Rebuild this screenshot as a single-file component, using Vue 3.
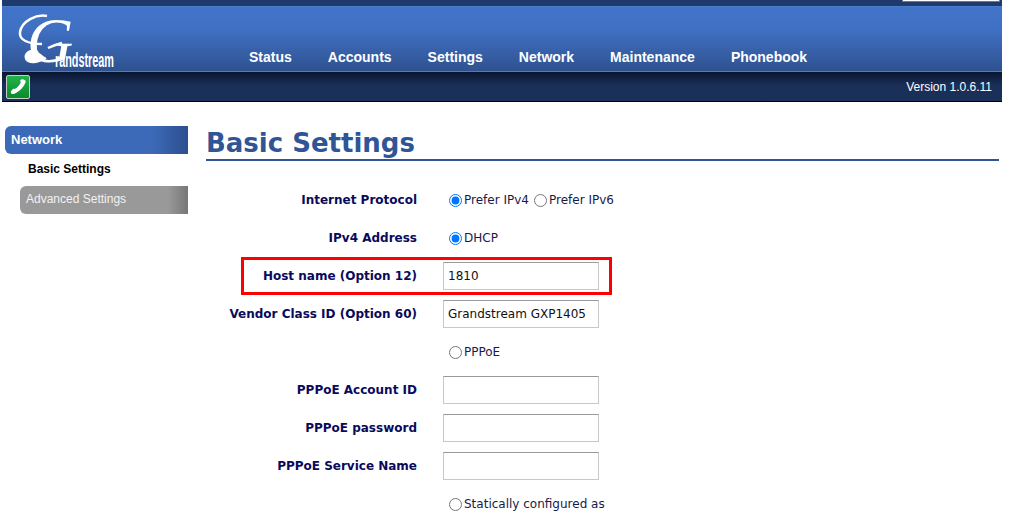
<script setup>
const menu = ['Status', 'Accounts', 'Settings', 'Network', 'Maintenance', 'Phonebook']
</script>

<template>
  <div class="page">
    <header class="header">
      <div class="top-strip">
        <div class="login-box"></div>
      </div>
      <div class="nav-bar">
        <svg class="logo" width="104" height="62" viewBox="0 0 104 62">
          <text x="15" y="54" class="logo-g" font-size="64">G</text>
          <path d="M35 8C24 6 10 13 8 24C7 32 16 36 30 36" class="swash" />
          <path d="M26 44C18 40 12 46 14 51C17 56 26 55 34 50" class="swash-thick" />
          <path d="M36 40C42 37 46 36 50 35" class="swash" />
          <text x="43" y="59" class="logo-text" textLength="59" lengthAdjust="spacingAndGlyphs">randstream</text>
        </svg>
        <nav class="menu">
          <a v-for="item in menu" :key="item" class="menu-item">{{ item }}</a>
        </nav>
      </div>
      <div class="status-bar">
        <div class="phone-icon">
          <svg width="20" height="20" viewBox="0 0 20 20">
            <path d="M15.5 2.5c-1-.6-2.2-.3-3 .6-.5.6-.2 1.500.3 2.100-.9 2.600-3.200 5.300-6 6.900-.7-.4-1.500-.4-2 .1-1 .9-2.200 2.200-2 3.500.2 1.100 2.100 1.800 3.600 1.100 5.300-2.400 9.900-7.300 11.300-12.100.3-1-.8-1.600-2.200-2.200z" fill="#fff" />
          </svg>
        </div>
        <span class="version">Version 1.0.6.11</span>
      </div>
    </header>

    <div class="content">
      <aside class="sidebar">
        <div class="side-title">Network</div>
        <div class="side-active">Basic Settings</div>
        <div class="side-link">Advanced Settings</div>
      </aside>

      <main class="main">
        <h1 class="title">Basic Settings</h1>
        <div class="form">
          <div class="row">
            <label class="label">Internet Protocol</label>
            <div class="value radios">
              <input type="radio" name="proto" checked /><span>Prefer IPv4</span>
              <input type="radio" name="proto" class="second" /><span>Prefer IPv6</span>
            </div>
          </div>
          <div class="row">
            <label class="label">IPv4 Address</label>
            <div class="value radios">
              <input type="radio" name="addr" checked /><span>DHCP</span>
            </div>
          </div>
          <div class="row highlighted">
            <label class="label">Host name (Option 12)</label>
            <div class="value"><input class="text" type="text" value="1810" /></div>
            <div class="red-box"></div>
          </div>
          <div class="row">
            <label class="label">Vendor Class ID (Option 60)</label>
            <div class="value"><input class="text" type="text" value="Grandstream GXP1405" /></div>
          </div>
          <div class="row">
            <label class="label"></label>
            <div class="value radios">
              <input type="radio" name="addr" /><span>PPPoE</span>
            </div>
          </div>
          <div class="row">
            <label class="label">PPPoE Account ID</label>
            <div class="value"><input class="text" type="text" /></div>
          </div>
          <div class="row">
            <label class="label">PPPoE password</label>
            <div class="value"><input class="text" type="text" /></div>
          </div>
          <div class="row">
            <label class="label">PPPoE Service Name</label>
            <div class="value"><input class="text" type="text" /></div>
          </div>
          <div class="row">
            <label class="label"></label>
            <div class="value radios">
              <input type="radio" name="addr" /><span>Statically configured as</span>
            </div>
          </div>
        </div>
      </main>
    </div>
  </div>
</template>

<style>
html, body {
  margin: 0;
  background: #fff;
  overflow: hidden;
}
</style>

<style scoped>
.page {
  height: 517px;
  overflow: hidden;
  font-family: "DejaVu Sans", sans-serif;
}

.header {
  width: 1000px;
  margin-left: 2px;
}

.top-strip {
  height: 6px;
  background: #1f3a6d;
  display: flex;
  justify-content: flex-end;
}

.login-box {
  width: 96px;
  height: 1px;
  margin-right: 2px;
  background: #fff;
  border: 1px solid #777;
  border-top: none;
}

.nav-bar {
  height: 64px;
  border-top: 1px solid #4a7ccb;
  border-bottom: 1px solid #4a7ccb;
  background: linear-gradient(#4174c9 0%, #3f70c3 35%, #2f5290 100%);
  display: flex;
  align-items: flex-end;
}

.logo {
  flex: none;
  margin-left: 10px;
  margin-bottom: 1px;
}

.logo-g {
  font-family: "Liberation Serif", serif;
  font-style: italic;
  fill: #fff;
}

.logo-text {
  font-family: "Liberation Sans", sans-serif;
  font-weight: 700;
  font-size: 20px;
  fill: #fff;
}

.swash {
  fill: none;
  stroke: #fff;
  stroke-width: 2.5;
}

.swash-thick {
  fill: #fff;
  stroke: #fff;
  stroke-width: 2;
}

.menu {
  display: flex;
  margin-left: 133px;
  padding-bottom: 6px;
}

.menu-item {
  font-family: "Liberation Sans", sans-serif;
  font-weight: 700;
  font-size: 14px;
  line-height: 16px;
  color: #fff;
  margin-right: 36px;
}

.status-bar {
  height: 29px;
  border-bottom: 1px solid #000;
  background: linear-gradient(#081630 0%, #1a2f58 45%, #1b3059 100%);
  display: flex;
  align-items: center;
  justify-content: space-between;
  padding: 0 10px 0 4px;
}

.phone-icon {
  width: 22px;
  height: 22px;
  border: 1px solid #c4d0c4;
  border-radius: 2px;
  background: linear-gradient(#22b34a, #0a8a2b);
  display: flex;
  align-items: center;
  justify-content: center;
}

.version {
  font-family: "Liberation Sans", sans-serif;
  font-size: 12px;
  color: #fff;
}

.content {
  display: flex;
  margin-top: 24px;
}

.sidebar {
  width: 183px;
  margin-left: 5px;
  font-family: "Liberation Sans", sans-serif;
  font-size: 12px;
  flex: none;
}

.side-title {
  height: 28px;
  line-height: 27px;
  padding-left: 6px;
  border-radius: 6px 0 0 6px;
  background: linear-gradient(90deg, #3d6ab8 0%, #3d6ab8 80%, #2c4f8e 100%);
  color: #fff;
  font-weight: 700;
  font-size: 13px;
}

.side-active {
  height: 32px;
  line-height: 30px;
  padding-left: 23px;
  color: #000;
  font-weight: 700;
}

.side-link {
  height: 28px;
  line-height: 26px;
  margin-left: 15px;
  padding-left: 6px;
  border-radius: 6px 0 0 6px;
  background: linear-gradient(90deg, #999 0%, #999 88%, #777 100%);
  color: #f2f2f2;
}

.main {
  width: 793px;
  margin-left: 18px;
}

.title {
  margin: 0;
  height: 33px;
  line-height: 34px;
  font-size: 26px;
  font-weight: 700;
  color: #2f5597;
  border-bottom: 2px solid #2f5597;
}

.form {
  padding-top: 20px;
}

.row {
  position: relative;
  display: flex;
  align-items: center;
  height: 38px;
}

.label {
  width: 211px;
  text-align: right;
  font-size: 12px;
  font-weight: 700;
  color: #0a0a5c;
}

.value {
  margin-left: 26px;
  font-size: 12px;
  color: #1a1a4a;
}

.radios {
  display: flex;
  align-items: center;
  padding-left: 6px;
}

.radios input {
  width: 13px;
  height: 13px;
  margin: 0 2px 0 0;
}

.radios .second {
  margin-left: 5px;
}

.text {
  display: block;
  box-sizing: border-box;
  width: 156px;
  height: 28px;
  padding: 0 4px;
  font-family: "DejaVu Sans", sans-serif;
  font-size: 12px;
  color: #111;
  border: 1px solid #c8c8c8;
  border-top-color: #999;
  outline: none;
}

.red-box {
  position: absolute;
  left: 35px;
  top: 0;
  width: 365px;
  height: 32px;
  border: 3px solid #f00;
  pointer-events: none;
}
</style>
